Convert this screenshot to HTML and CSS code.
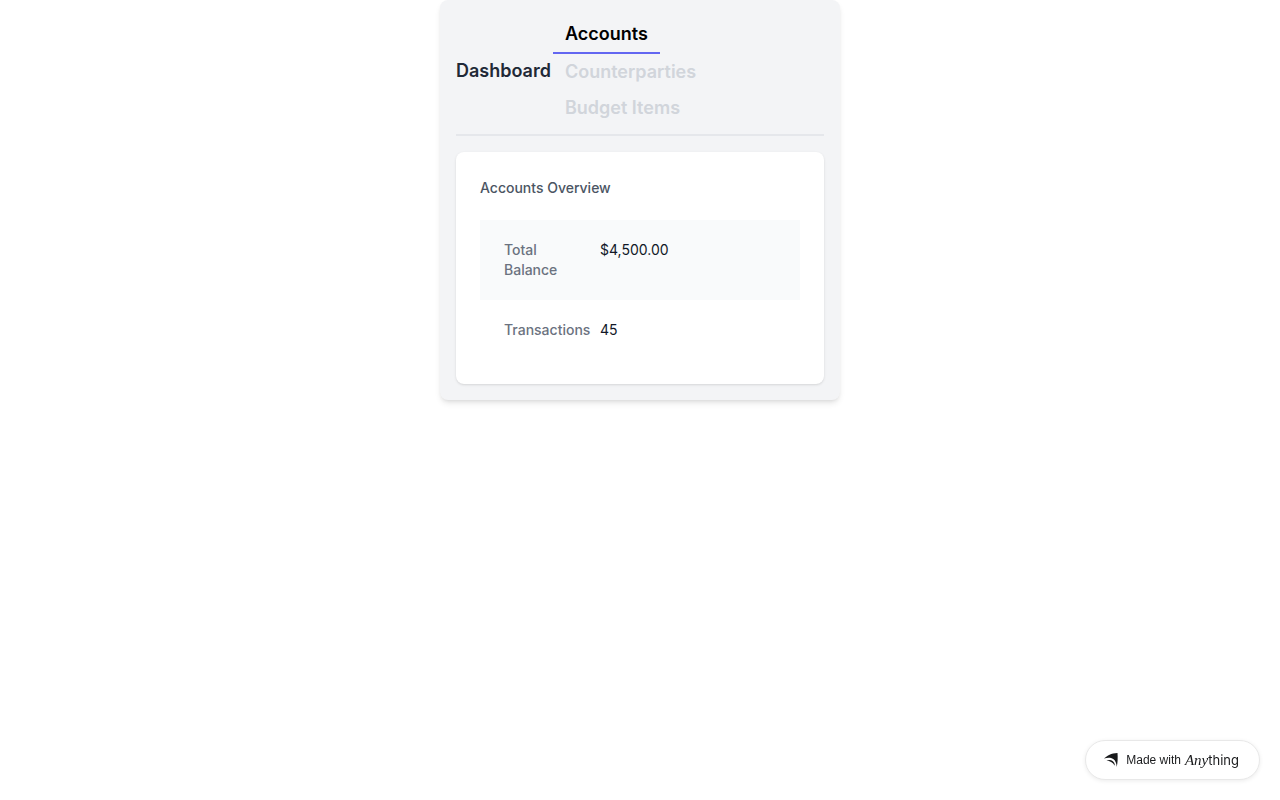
FILE: index.html
```
<!DOCTYPE html>
<html lang="en">
<head>
    <meta charset="utf-8">
    <title>Dashboard</title>
    <link rel="stylesheet" href="styles.css">
</head>
<body>
    <main class="container">
        <header class="header">
            <h1 class="title">Dashboard</h1>
            <nav class="tabs">
                <button type="button" class="tab active">Accounts</button>
                <button type="button" class="tab">Counterparties</button>
                <button type="button" class="tab">Budget Items</button>
            </nav>
        </header>

        <section class="card">
            <h2 class="card-title">Accounts Overview</h2>
            <dl class="stats">
                <div class="row shaded">
                    <dt>Total Balance</dt>
                    <dd>$4,500.00</dd>
                </div>
                <div class="row">
                    <dt>Transactions</dt>
                    <dd>45</dd>
                </div>
            </dl>
        </section>
    </main>

    <a class="badge" href="#">
        <svg class="badge-icon" width="14" height="14" viewBox="0 0 14 14" aria-hidden="true">
            <path d="M0 5.500C3.500 2.500 7 .4 13.500 0c.4 5 .2 9.800-.8 14C12.600 10.200 11.400 7.500 9.200 6 6.800 4.400 3.500 4.500 0 5.500z" fill="#18191b"/>
            <path d="M2.500 7.800c2.300-1 4.500-.9 6.100.3 1.600 1.200 2.200 2.800 2.200 4.700C9.900 11 8.600 9.700 7.100 8.900 5.700 8.200 4.200 7.900 2.500 7.800z" fill="#18191b"/>
        </svg>
        <span class="badge-text">Made with</span>
        <span class="badge-brand"><em>Any</em>thing</span>
    </a>
</body>
</html>
```

FILE: styles.css
```
* {
    box-sizing: border-box;
}
body {
    min-height: 100vh;
    margin: 0;
    background-color: #fff;
    font-family: Inter, sans-serif;
    font-size: 14px;
    line-height: 20px;
}
h1, h2, dl, dd {
    margin: 0;
}
.container {
    max-width: 400px;
    margin: 0 auto;
    padding: 16px;
    background-color: #f3f4f6;
    border-radius: 8px;
    box-shadow: 0 4px 6px -1px rgba(0,0,0,0.1), 0 2px 4px -2px rgba(0,0,0,0.1);
}
.header {
    display: flex;
    align-items: center;
    gap: 2px;
    margin-bottom: 16px;
    padding-bottom: 8px;
    border-bottom: 2px solid #e5e7eb;
}
.title {
    color: #1f2937;
    font-size: 18px;
    font-weight: 600;
    line-height: 28px;
}
.tabs {
    display: flex;
    flex-direction: column;
    align-items: flex-start;
}
.tab {
    padding: 4px 12px;
    border: 0;
    background: none;
    color: #d1d5db;
    font: 600 18px/28px Inter, sans-serif;
    cursor: pointer;
}
.tab.active {
    border-bottom: 2px solid #6366f1;
    color: #000;
}
.card {
    padding: 24px;
    background-color: #fff;
    border-radius: 8px;
    box-shadow: 0 1px 3px rgba(0,0,0,0.1), 0 1px 2px -1px rgba(0,0,0,0.1);
}
.card-title {
    margin-bottom: 20px;
    color: #4b5563;
    font-size: 14px;
    font-weight: 500;
    line-height: 24px;
}
.row {
    display: grid;
    grid-template-columns: repeat(3, minmax(0, 1fr));
    gap: 16px;
    padding: 20px 24px;
}
.row.shaded {
    background-color: #f9fafb;
}
.row dt {
    color: #6b7280;
    font-weight: 500;
}
.row dd {
    grid-column: span 2;
    color: #111827;
}
/* floats over the page in the corner */
.badge {
    position: fixed;
    right: 20px;
    bottom: 20px;
    display: flex;
    align-items: center;
    height: 40px;
    padding: 0 20px 0 18px;
    border: 1px solid #e8e8e8;
    border-radius: 20px;
    background-color: #fff;
    box-shadow: 0 1px 4px rgba(0,0,0,0.08);
    color: #18191b;
    text-decoration: none;
}
.badge-icon {
    margin-right: 8px;
}
.badge-text {
    margin-right: 4px;
    font-family: "Liberation Sans", Arial, sans-serif;
    font-size: 12px;
}
.badge-brand {
    font-size: 13px;
    font-weight: 400;
}
.badge-brand em {
    font-family: "Liberation Serif", serif;
    font-size: 15px;
    font-weight: 400;
}
```
